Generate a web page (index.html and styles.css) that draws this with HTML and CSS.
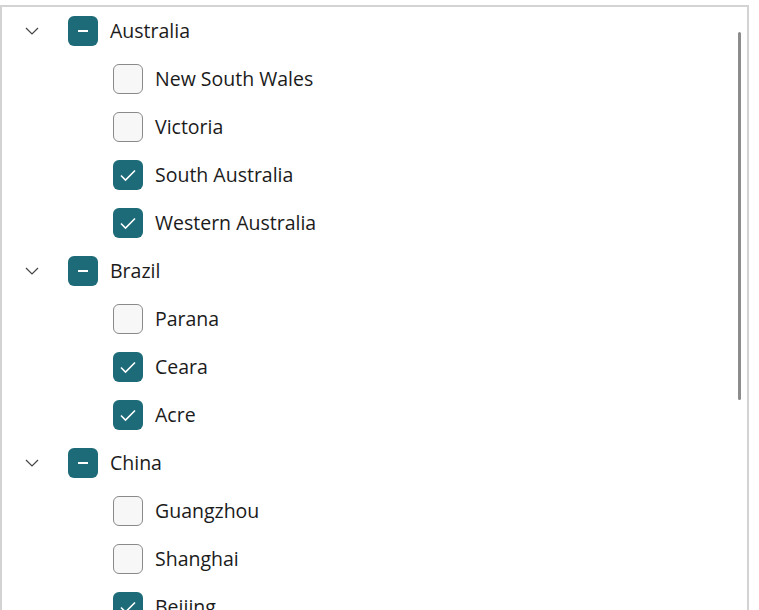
FILE: index.html
```html
<!DOCTYPE html>
<html>
<head>
<meta charset="utf-8">
<link rel="stylesheet" href="styles.css">
</head>
<body>
<div class="tree">
  <div class="scrollbar"></div>
  <div class="row parent">
    <span class="chev"><svg width="14" height="8" viewBox="0 0 14 8"><path d="M1 1 L7 7 L13 1" fill="none" stroke="#444" stroke-width="1.2"/></svg></span>
    <span class="box partial"><span class="dash"></span></span>
    <span class="label">Australia</span>
  </div>
  <div class="row child"><span class="box"></span><span class="label">New South Wales</span></div>
  <div class="row child"><span class="box"></span><span class="label">Victoria</span></div>
  <div class="row child"><span class="box checked"><svg width="18" height="14" viewBox="0 0 18 14"><path d="M2 7.5 L6.5 12 L16 2.5" fill="none" stroke="#fff" stroke-width="1.6"/></svg></span><span class="label">South Australia</span></div>
  <div class="row child"><span class="box checked"><svg width="18" height="14" viewBox="0 0 18 14"><path d="M2 7.5 L6.5 12 L16 2.5" fill="none" stroke="#fff" stroke-width="1.6"/></svg></span><span class="label">Western Australia</span></div>
  <div class="row parent">
    <span class="chev"><svg width="14" height="8" viewBox="0 0 14 8"><path d="M1 1 L7 7 L13 1" fill="none" stroke="#444" stroke-width="1.2"/></svg></span>
    <span class="box partial"><span class="dash"></span></span>
    <span class="label">Brazil</span>
  </div>
  <div class="row child"><span class="box"></span><span class="label">Parana</span></div>
  <div class="row child"><span class="box checked"><svg width="18" height="14" viewBox="0 0 18 14"><path d="M2 7.5 L6.5 12 L16 2.5" fill="none" stroke="#fff" stroke-width="1.6"/></svg></span><span class="label">Ceara</span></div>
  <div class="row child"><span class="box checked"><svg width="18" height="14" viewBox="0 0 18 14"><path d="M2 7.5 L6.5 12 L16 2.5" fill="none" stroke="#fff" stroke-width="1.6"/></svg></span><span class="label">Acre</span></div>
  <div class="row parent">
    <span class="chev"><svg width="14" height="8" viewBox="0 0 14 8"><path d="M1 1 L7 7 L13 1" fill="none" stroke="#444" stroke-width="1.2"/></svg></span>
    <span class="box partial"><span class="dash"></span></span>
    <span class="label">China</span>
  </div>
  <div class="row child"><span class="box"></span><span class="label">Guangzhou</span></div>
  <div class="row child"><span class="box"></span><span class="label">Shanghai</span></div>
  <div class="row child"><span class="box checked"><svg width="18" height="14" viewBox="0 0 18 14"><path d="M2 7.5 L6.5 12 L16 2.5" fill="none" stroke="#fff" stroke-width="1.6"/></svg></span><span class="label">Beijing</span></div>
</div>
</body>
</html>
```
FILE: styles.css
```css
html, body {
  margin: 0;
  padding: 0;
  background: #fff;
  overflow: hidden;
  height: 610px;
}
.tree {
  position: relative;
  margin-top: 5px;
  width: 745px;
  height: 700px;
  border: 2px solid #d3d3d3;
  border-bottom: none;
  font-family: "Open Sans", "Noto Sans", sans-serif;
  font-size: 19.5px;
  color: #1b1b1b;
}
.scrollbar {
  position: absolute;
  left: 736px;
  top: 25px;
  width: 3px;
  height: 368px;
  border-radius: 2px;
  background: #8c8c8c;
}
.row {
  height: 48px;
  display: flex;
  align-items: center;
}
.chev {
  width: 14px;
  margin-left: 23px;
  margin-right: 29px;
  display: flex;
  align-items: center;
}
.child {
  padding-left: 111px;
}
.box {
  width: 30px;
  height: 30px;
  box-sizing: border-box;
  border-radius: 6px;
  border: 1.5px solid #8a8a8a;
  background: #f7f7f7;
  margin-right: 12px;
  display: flex;
  align-items: center;
  justify-content: center;
  flex-shrink: 0;
}
.box.partial, .box.checked {
  border: none;
  background: #1d6a78;
}
.dash {
  width: 10px;
  height: 2px;
  background: #fff;
}
.label {
  line-height: 48px;
}
```
